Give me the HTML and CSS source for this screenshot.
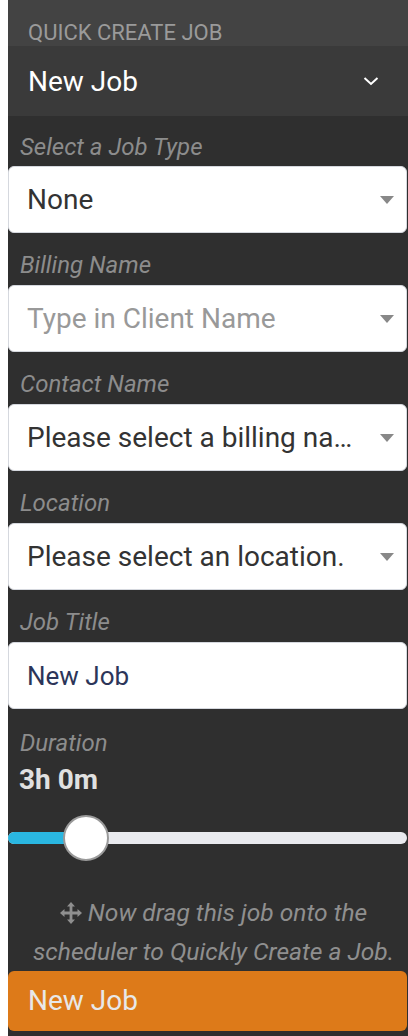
FILE: index.html
```html
<!DOCTYPE html>
<html>
<head>
<meta charset="utf-8">
<link rel="stylesheet" href="styles.css">
</head>
<body>
<div class="panel">
  <div class="top">QUICK CREATE JOB</div>
  <div class="head">
    <span class="head-title">New Job</span>
    <svg class="chev" width="16" height="10" viewBox="0 0 16 10"><path d="M1.5 2 L8 8 L14.5 2" fill="none" stroke="#fff" stroke-width="2"/></svg>
  </div>
  <div class="body">
    <div class="label first">Select a Job Type</div>
    <div class="box"><span class="val">None</span><span class="caret"></span></div>
    <div class="label">Billing Name</div>
    <div class="box"><span class="val ph">Type in Client Name</span><span class="caret"></span></div>
    <div class="label">Contact Name</div>
    <div class="box"><span class="val">Please select a billing na…</span><span class="caret"></span></div>
    <div class="label">Location</div>
    <div class="box"><span class="val">Please select an location.</span><span class="caret"></span></div>
    <div class="label">Job Title</div>
    <div class="box"><span class="val title">New Job</span></div>
    <div class="label dur">Duration</div>
    <div class="dur-val">3h 0m</div>
    <div class="slider">
      <div class="track"><div class="fill"></div></div>
      <div class="thumb"></div>
    </div>
    <p class="hint"><svg class="move" width="22" height="22" viewBox="0 0 22 22"><path fill="#8f8f8f" d="M11 0 L15 4.5 L12.4 4.5 L12.4 9.6 L17.5 9.6 L17.5 7 L22 11 L17.5 15 L17.5 12.4 L12.4 12.4 L12.4 17.5 L15 17.5 L11 22 L7 17.5 L9.6 17.5 L9.6 12.4 L4.5 12.4 L4.5 15 L0 11 L4.5 7 L4.5 9.6 L9.6 9.6 L9.6 4.5 L7 4.5 Z"/></svg> Now drag this job onto the scheduler to Quickly Create a Job.</p>
    <div class="job-btn">New Job</div>
  </div>
</div>
</body>
</html>
```
FILE: styles.css
```css
html, body {
  margin: 0;
  padding: 0;
  background: #ffffff;
}
body {
  padding-left: 8px;
  font-family: Roboto, "Liberation Sans", sans-serif;
}
.panel {
  width: 400px;
  height: 1036px;
  background: #2f2f2f;
  overflow: hidden;
}
.top {
  height: 46px;
  background: #434343;
  color: #9a9a9a;
  font-size: 22px;
  line-height: 24px;
  padding-left: 20px;
  padding-top: 21px;
  box-sizing: border-box;
  white-space: nowrap;
}
.head {
  height: 70px;
  background: #3a3a3a;
  display: flex;
  align-items: center;
  justify-content: space-between;
  padding: 0 29px 0 20px;
}
.head-title {
  color: #ffffff;
  font-size: 28px;
}
.chev {
  display: block;
}
.body {
  padding-right: 1px;
}
.label {
  color: #8c8c8c;
  font-style: italic;
  font-size: 24px;
  line-height: 28px;
  padding: 18px 0 6px 12px;
}
.label.first {
  padding-top: 17px;
  padding-bottom: 5px;
}
.box {
  height: 67px;
  box-sizing: border-box;
  background: #ffffff;
  border: 1px solid #d5d8de;
  border-radius: 6px;
  display: flex;
  align-items: center;
  padding: 0 12px 0 18px;
  gap: 14px;
}
.val {
  flex: 1;
  min-width: 0;
  font-size: 28px;
  color: #333333;
  white-space: nowrap;
  overflow: hidden;
}
.val.ph {
  color: #999999;
}
.val.title {
  color: #2c3559;
  font-size: 26px;
}
.caret {
  width: 0;
  height: 0;
  border-left: 7px solid transparent;
  border-right: 7px solid transparent;
  border-top: 8px solid #888888;
  flex: none;
}
.label.dur {
  padding-top: 20px;
  padding-bottom: 0;
}
.dur-val {
  color: #e0e0e0;
  font-weight: bold;
  font-size: 28px;
  line-height: 30px;
  padding-left: 11px;
  margin-top: 8px;
}
.slider {
  position: relative;
  height: 50px;
  margin-top: 18px;
  display: flex;
  align-items: center;
}
.track {
  flex: 1;
  height: 12px;
  border-radius: 6px;
  background: #e9eaee;
  overflow: hidden;
}
.fill {
  width: 70px;
  height: 100%;
  background: #2ab7e1;
}
.thumb {
  position: absolute;
  left: 55px;
  top: 2px;
  width: 42px;
  height: 42px;
  border-radius: 50%;
  background: #ffffff;
  border: 2px solid #9a9a9a;
}
.hint {
  margin: 30px 0 0 0;
  padding: 0 0 0 12px;
  text-align: center;
  color: #8f8f8f;
  font-style: italic;
  font-size: 24.6px;
  line-height: 39px;
}
.move {
  vertical-align: -3px;
}
.job-btn {
  margin-top: 0;
  height: 60px;
  background: #dd7a19;
  border-radius: 6px;
  color: #e8e8e8;
  font-size: 28px;
  line-height: 60px;
  padding-left: 20px;
}
```
